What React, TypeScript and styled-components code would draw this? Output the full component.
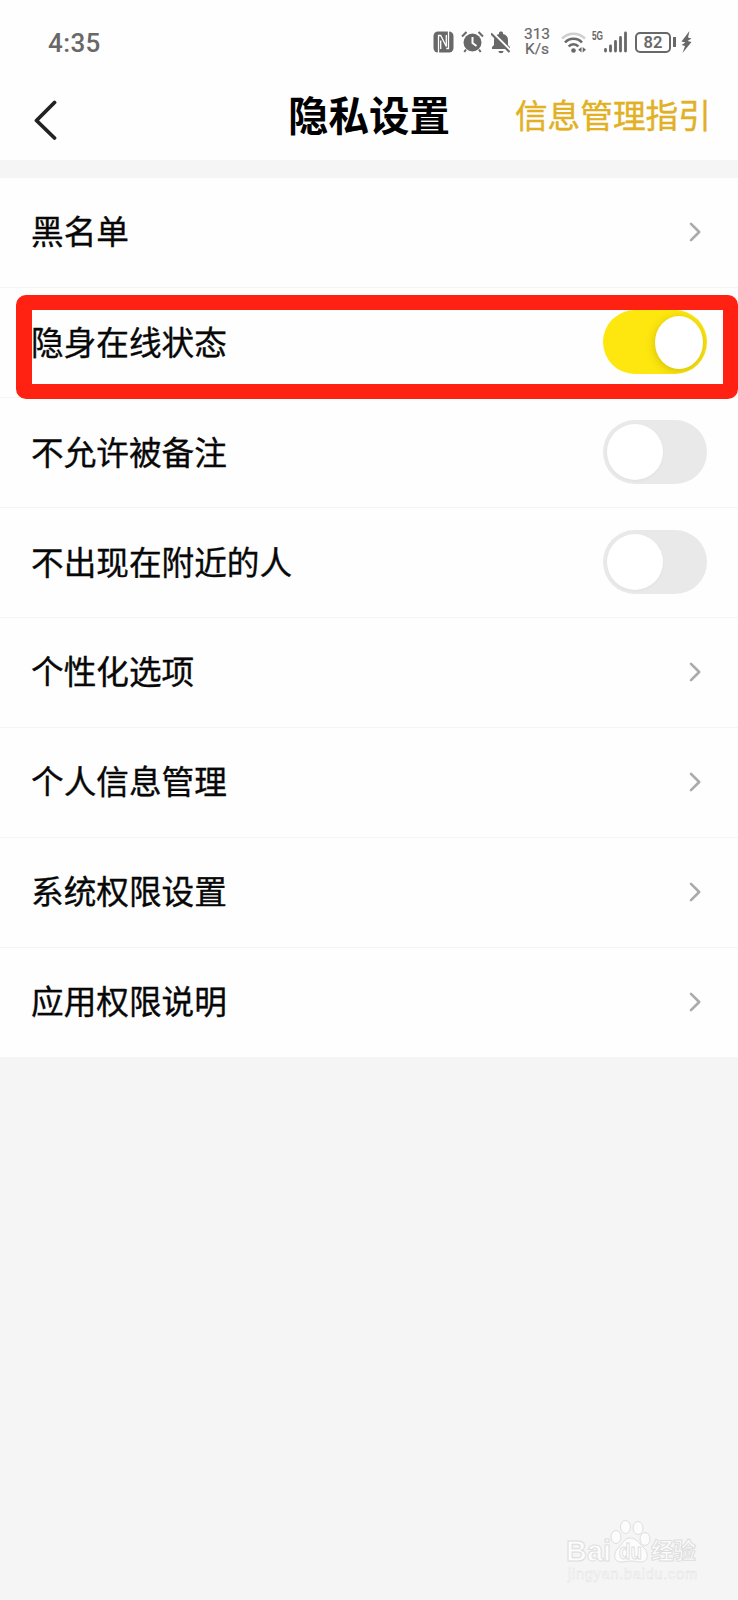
import React from "react";
import styled, { createGlobalStyle } from "styled-components";

const GlobalStyle = createGlobalStyle`
  * { box-sizing: border-box; }
  body {
    margin: 0;
    background: #f5f5f5;
    font-family: "Noto Sans CJK SC", "Noto Sans", sans-serif;
  }
`;

const Screen = styled.div`
  position: relative;
  width: 738px;
  height: 1600px;
  overflow: hidden;
  background: #f5f5f5;
`;

const StatusBar = styled.div`
  display: flex;
  align-items: center;
  justify-content: space-between;
  height: 84px;
  padding: 0 46px 0 48px;
  background: #fefefe;
  color: #686868;
`;

const Clock = styled.span`
  font: 500 26px/30px Roboto, "Noto Sans", sans-serif;
  letter-spacing: 0.4px;
  margin-top: 2px;
`;

const StatusIcons = styled.div`
  display: flex;
  align-items: center;
`;

const Glyph = styled.svg<{ $gap?: number }>`
  display: block;
  flex: none;
  margin-right: ${(p) => p.$gap ?? 0}px;
`;

const Speed = styled.div`
  width: 28px;
  margin-right: 10px;
  font: 400 15.5px/15px Roboto, sans-serif;
  -webkit-text-stroke: 0.2px #686868;
  text-align: center;
  white-space: nowrap;
`;

const Network = styled.span`
  align-self: flex-start;
  width: 11px;
  margin: 2px 1px 0 0;
  font: 700 12.5px/14px "Liberation Sans", sans-serif;
  white-space: nowrap;
`;

const NetworkText = styled.span`
  display: inline-block;
  transform: scaleX(0.66);
  transform-origin: left;
`;

const Battery = styled.div`
  display: flex;
  align-items: center;
  justify-content: center;
  width: 36px;
  height: 21px;
  border: 2px solid #686868;
  border-radius: 5px;
  font: 600 16.5px/17px Roboto, sans-serif;
`;

const BatteryTip = styled.div`
  width: 2.5px;
  height: 10px;
  margin: 0 5.5px 0 2px;
  background: #686868;
`;

const Header = styled.header`
  display: grid;
  grid-template-columns: 1fr auto 1fr;
  align-items: center;
  height: 76px;
  padding: 0 28px 0 34px;
  background: #fefefe;
`;

const BackButton = styled.button`
  justify-self: start;
  margin-top: -4px;
  padding: 0;
  border: 0;
  background: none;
`;

const Title = styled.h1`
  margin: 0 6px 16px 0;
  color: #000;
  font-size: 40.5px;
  line-height: 58px;
  font-weight: 700;
`;

const GuideLink = styled.a`
  justify-self: end;
  margin: 0 -1px 16px 0;
  color: #e2b023;
  font-size: 32.7px;
  line-height: 48px;
  white-space: nowrap;
  -webkit-text-stroke: 0.4px #e2b023;
`;

const List = styled.main`
  display: flex;
  flex-direction: column;
  margin-top: 18px;
`;

const Row = styled.div`
  display: flex;
  align-items: center;
  justify-content: space-between;
  height: 110px;
  padding: 0 31px 2px;
  border-bottom: 1px solid #f5f5f5;
  background: #fefefe;
`;

const Label = styled.span<{ $lift: number }>`
  margin-bottom: ${(p) => p.$lift}px;
  color: #080808;
  font-size: 32.65px;
  line-height: 48px;
  -webkit-text-stroke: 0.35px #080808;
`;

const Toggle = styled.div<{ $on: boolean }>`
  display: flex;
  align-items: center;
  justify-content: ${(p) => (p.$on ? "flex-end" : "flex-start")};
  width: 104px;
  height: 64px;
  margin-top: 1px;
  padding: 0 4px;
  border-radius: 32px;
  background: ${(p) => (p.$on ? "#fde70f" : "#e9e9e9")};
  overflow: hidden;
`;

const Knob = styled.div<{ $on: boolean }>`
  width: ${(p) => (p.$on ? 48 : 56)}px;
  height: ${(p) => (p.$on ? 53 : 56)}px;
  border-radius: 50%;
  background: #fff;
  box-shadow: ${(p) =>
    p.$on ? "0 2px 10px rgba(110, 90, 0, 0.3)" : "0 1px 3px rgba(0, 0, 0, 0.04)"};
`;

const Highlight = styled.div`
  position: absolute;
  top: 295px;
  left: 16px;
  width: 722px;
  height: 104px;
  border: solid #ff2111;
  border-width: 15px 15px 15.5px 16px;
  border-radius: 10px;
  pointer-events: none;
`;

const Watermark = styled.svg`
  position: absolute;
  left: 560px;
  top: 1514px;
`;

const Chevron = () => (
  <Glyph $gap={5} width="14" height="24" viewBox="0 0 14 24" fill="none">
    <path d="M3 3.8 11.2 12 3 20.2" stroke="#aaa" strokeWidth="2.6" strokeLinecap="round" strokeLinejoin="round" />
  </Glyph>
);

const items: { label: string; toggle?: boolean }[] = [
  { label: "黑名单" },
  { label: "隐身在线状态", toggle: true },
  { label: "不允许被备注", toggle: false },
  { label: "不出现在附近的人", toggle: false },
  { label: "个性化选项" },
  { label: "个人信息管理" },
  { label: "系统权限设置" },
  { label: "应用权限说明" },
];

export default function App() {
  return (
    <Screen>
      <GlobalStyle />
      <StatusBar>
        <Clock>4:35</Clock>
        <StatusIcons>
          <Glyph $gap={7} width="21" height="22" viewBox="0 0 21 22" fill="none">
            <rect x="0.5" y="0.5" width="20" height="21" rx="4.5" fill="#686868" />
            <path d="M5.5 22V4.5h2.2l5.6 11V4M7.700 9.500V18M15.500 0v17.500h-2.200" stroke="#fefefe" strokeWidth="1.3" />
          </Glyph>
          <Glyph $gap={7} width="23" height="22" viewBox="0 0 23 22" fill="none">
            <circle cx="11.5" cy="11.5" r="9" fill="#686868" />
            <path d="M1 5.5 5.5 1M22 5.5 17.5 1M5 18.5 3.3 21M18 18.5l1.7 2.5" stroke="#686868" strokeWidth="2" />
            <path d="M11.5 6v6l4 3" stroke="#fefefe" strokeWidth="2" />
          </Glyph>
          <Glyph $gap={12} width="20" height="23" viewBox="0 0 20 23" fill="none">
            <path d="M1 18v-2l2-2V9c0-3.3 2-5.5 5-6V2c0-2 4-2 4 0v1c3 .5 5 2.7 5 6v5l2 2v2ZM7.5 20h5c0 3-5 3-5 0Z" fill="#686868" />
            <path d="M1.5 1.5 20 20" stroke="#fefefe" strokeWidth="2.4" />
            <path d="M0 2.5 18.5 21" stroke="#686868" strokeWidth="2.2" />
          </Glyph>
          <Speed>
            313
            <br />
            K/s
          </Speed>
          <Glyph $gap={6} width="25" height="23" viewBox="0 0 25 23" fill="none">
            <path d="M1 7.5c6.5-6.5 16.5-6.5 23 0" stroke="#cfcfcf" strokeWidth="2.5" />
            <path d="M4 11.5c4.5-5 12.5-5 17 0M7.7 15.5c2.3-3 7.3-3 9.6 0" stroke="#686868" strokeWidth="2.5" />
            <circle cx="12.5" cy="19.5" r="2.3" fill="#686868" />
            <path d="m20.5 16-3.3 2.7 3.3 2.7ZM21.7 16v5.4l3.3-2.7Z" fill="#686868" />
          </Glyph>
          <Network>
            <NetworkText>5G</NetworkText>
          </Network>
          <Glyph $gap={8} width="23" height="22" viewBox="0 0 23 22" fill="none">
            <path d="M1.5 18.5v1.5M6.5 15v5M11.5 10.5v9.5M16.5 6.5v13.5M21.5 2v18" stroke="#686868" strokeWidth="2.8" strokeLinecap="round" />
          </Glyph>
          <Battery>82</Battery>
          <BatteryTip />
          <Glyph width="11" height="22" viewBox="0 0 11 22">
            <path d="M8.5 0 .5 10.500l4 1L.5 14l3.500 1L1.500 22l9-11-4-1L10.500 7.500 7 6.500Z" fill="#686868" />
          </Glyph>
        </StatusIcons>
      </StatusBar>
      <Header>
        <BackButton aria-label="返回">
          <Glyph width="24" height="42" viewBox="0 0 24 42" fill="none">
            <path d="M20.5 3.5 2.5 21.5 20.5 39" stroke="#222" strokeWidth="3.8" strokeLinecap="round" strokeLinejoin="round" />
          </Glyph>
        </BackButton>
        <Title>隐私设置</Title>
        <GuideLink>信息管理指引</GuideLink>
      </Header>
      <List>
        {items.map(({ label, toggle }) => (
          <Row key={label}>
            <Label $lift={toggle === undefined ? 3 : 1}>{label}</Label>
            {toggle === undefined ? (
              <Chevron />
            ) : (
              <Toggle $on={toggle}>
                <Knob $on={toggle} />
              </Toggle>
            )}
          </Row>
        ))}
      </List>
      <Highlight />
      <Watermark width="150" height="72" viewBox="0 0 150 72" fontFamily="'Liberation Sans', 'Noto Sans CJK SC', sans-serif">
        <g fill="#fcfcfc" stroke="#dedede" strokeWidth="1">
          <ellipse cx="56" cy="23" rx="5" ry="6.5" />
          <ellipse cx="65.5" cy="13" rx="5" ry="6.5" />
          <ellipse cx="78" cy="14" rx="5" ry="6.5" />
          <ellipse cx="85" cy="25" rx="5" ry="6.5" />
          <path d="M70 24c-5 0-7 5-11 9-6 5-6 15 2 15 4 0 6-1 10-1s6 1 10 1c8 0 8-10 2-15-4-4-7-9-13-9Z" />
          <text x="6" y="47" fontSize="29" fontWeight="700" textLength="45" lengthAdjust="spacingAndGlyphs">Bai</text>
          <text x="59" y="45" fontSize="22" fontWeight="700" textLength="23" lengthAdjust="spacingAndGlyphs">du</text>
          <text x="91" y="45" fontSize="23" fontWeight="700" textLength="45">经验</text>
        </g>
        <text x="8" y="65" fontSize="14.5" textLength="129" fill="#fcfcfc" stroke="#e3e3e3" strokeWidth="0.5">jingyan.baidu.com</text>
      </Watermark>
    </Screen>
  );
}
